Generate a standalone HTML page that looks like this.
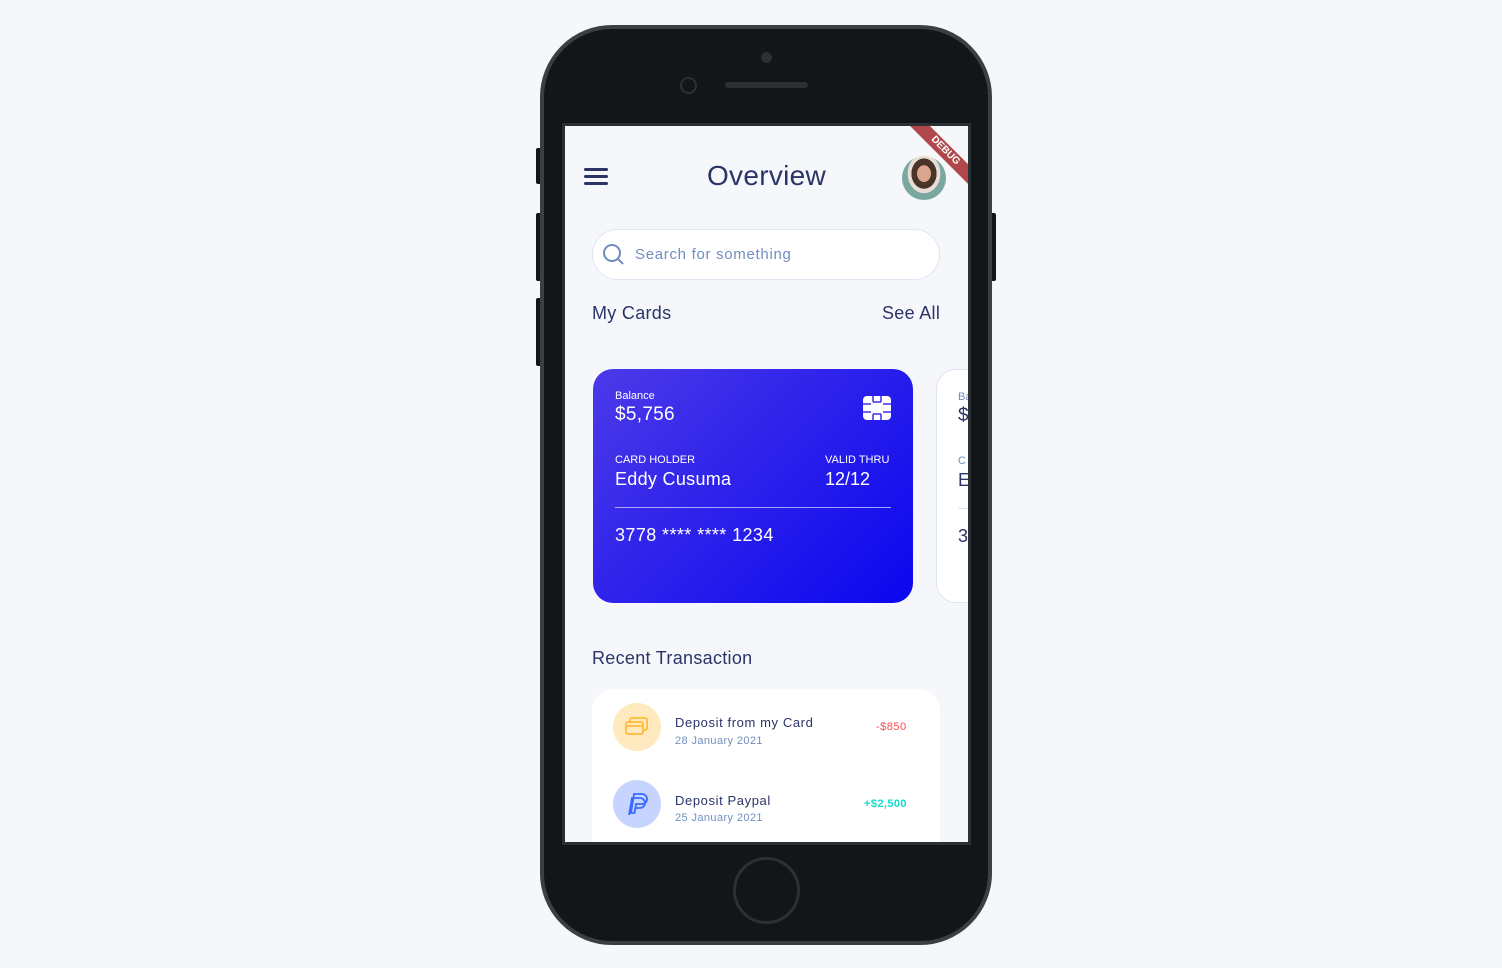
<!DOCTYPE html>
<html><head><style>
*{margin:0;padding:0;box-sizing:border-box}
body{width:1502px;height:968px;background:#f5f7fb;position:relative;overflow:hidden;font-family:"Liberation Sans",sans-serif}
.abs{position:absolute}
.phone{left:540px;top:25px;width:452px;height:920px;background:#131618;border:4px solid #3a3f43;border-radius:72px}
.btn{background:#131618;border-radius:2px}
.screen{left:565px;top:126px;width:403px;height:716px;background:#f5f7fb;overflow:hidden}
.t{color:#2b3467}
</style></head><body>
<div class="abs btn" style="left:536px;top:148px;width:6px;height:36px"></div>
<div class="abs btn" style="left:536px;top:213px;width:6px;height:68px"></div>
<div class="abs btn" style="left:536px;top:298px;width:6px;height:68px"></div>
<div class="abs btn" style="left:990px;top:213px;width:6px;height:68px"></div>
<div class="abs phone"></div>
<div class="abs" style="left:761px;top:52px;width:11px;height:11px;border-radius:50%;background:#2b3034"></div>
<div class="abs" style="left:725px;top:82px;width:83px;height:6px;border-radius:3px;background:#2b3034"></div>
<div class="abs" style="left:680px;top:77px;width:17px;height:17px;border-radius:50%;border:2px solid #2b3034"></div>
<div class="abs" style="left:733px;top:857px;width:67px;height:67px;border-radius:50%;border:3px solid #2b3034"></div>
<div class="abs" style="left:562px;top:123px;width:409px;height:722px;background:#2b3034"></div>
<div class="abs screen">
 <div class="abs" style="left:19px;top:42px;width:24px;height:3px;background:#2b3467;border-radius:2px"></div>
 <div class="abs" style="left:19px;top:49px;width:24px;height:3px;background:#2b3467;border-radius:2px"></div>
 <div class="abs" style="left:19px;top:56px;width:24px;height:3px;background:#2b3467;border-radius:2px"></div>
 <div class="abs t" style="left:0;width:403px;top:34px;text-align:center;font-size:28px;letter-spacing:.3px">Overview</div>
 <div class="abs" style="left:337px;top:30px;width:44px;height:44px;border-radius:50%;background:radial-gradient(ellipse at 50% 40%,#d9a58c 0 22%,#4a3328 23% 40%,#e8ddd4 41% 52%,#7aa79f 53%)"></div>
 <div class="abs" style="left:320px;top:18px;width:120px;height:14px;background:#b0474b;transform:rotate(45deg);color:#fff;font-size:10px;font-weight:bold;text-align:center;line-height:14px">DEBUG</div>
 <div class="abs" style="left:27px;top:103px;width:348px;height:51px;background:#fff;border:1px solid #dfe6f1;border-radius:26px"></div>
 <svg class="abs" style="left:37px;top:117px" width="24" height="24" viewBox="0 0 24 24"><circle cx="10" cy="10" r="8" fill="none" stroke="#718ebf" stroke-width="2"/><path d="M16 16l5 5" stroke="#718ebf" stroke-width="2"/></svg>
 <div class="abs" style="left:70px;top:120px;font-size:15px;color:#718ebf;letter-spacing:.7px">Search for something</div>
 <div class="abs t" style="left:27px;top:177px;font-size:18px;letter-spacing:.3px">My Cards</div>
 <div class="abs t" style="left:317px;top:177px;font-size:18px;letter-spacing:.3px">See All</div>
 <div class="abs" style="left:28px;top:243px;width:320px;height:234px;border-radius:20px;background:linear-gradient(135deg,#4c3ae8,#0a06ef);color:#fff">
  <div class="abs" style="left:22px;top:21px;font-size:11px">Balance</div>
  <div class="abs" style="left:22px;top:35px;font-size:19px;letter-spacing:.3px">$5,756</div>
  <svg class="abs" style="left:270px;top:27px" width="28" height="24" viewBox="0 0 28 24"><rect width="28" height="24" rx="4" fill="#fff"/><path d="M0 8h8M0 16h8M20 8h8M20 16h8M10 0v6M18 0v6M10 18v6M18 18v6M10 6h8M10 18h8" stroke="#3a2ef0" stroke-width="1.5" fill="none"/></svg>
  <div class="abs" style="left:22px;top:85px;font-size:11px">CARD HOLDER</div>
  <div class="abs" style="left:22px;top:100px;font-size:18px;letter-spacing:.3px">Eddy Cusuma</div>
  <div class="abs" style="left:232px;top:85px;font-size:11px">VALID THRU</div>
  <div class="abs" style="left:232px;top:100px;font-size:18px">12/12</div>
  <div class="abs" style="left:22px;top:138px;width:276px;height:1px;background:rgba(255,255,255,.6)"></div>
  <div class="abs" style="left:22px;top:156px;font-size:18px;letter-spacing:.4px">3778 **** **** 1234</div>
 </div>
 <div class="abs" style="left:371px;top:243px;width:60px;height:234px;border-radius:20px;background:#fff;border:1px solid #dfe6f1">
  <div class="abs" style="left:21px;top:21px;font-size:11px;color:#718ebf">Ba</div>
  <div class="abs t" style="left:21px;top:35px;font-size:19px">$</div>
  <div class="abs" style="left:21px;top:85px;font-size:11px;color:#718ebf">C</div>
  <div class="abs t" style="left:21px;top:100px;font-size:18px">E</div>
  <div class="abs" style="left:21px;top:138px;width:40px;height:1px;background:#dfe6f1"></div>
  <div class="abs t" style="left:21px;top:156px;font-size:18px">3</div>
 </div>
 <div class="abs t" style="left:27px;top:522px;font-size:18px;letter-spacing:.3px">Recent Transaction</div>
 <div class="abs" style="left:27px;top:563px;width:348px;height:200px;background:#fff;border-radius:22px"></div>
 <div class="abs" style="left:48px;top:577px;width:48px;height:48px;border-radius:50%;background:#ffe9bf"></div>
 <svg class="abs" style="left:60px;top:590px" width="24" height="22" viewBox="0 0 24 22"><rect x="5" y="2" width="17" height="12" rx="2" fill="none" stroke="#ffbb38" stroke-width="1.8"/><rect x="1" y="6" width="17" height="12" rx="2" fill="#ffe9bf" stroke="#ffbb38" stroke-width="1.8"/><path d="M1 10h17" stroke="#ffbb38" stroke-width="1.8"/></svg>
 <div class="abs t" style="left:110px;top:589px;font-size:13px;letter-spacing:.6px">Deposit from my Card</div>
 <div class="abs" style="left:110px;top:609px;font-size:11px;color:#718ebf;letter-spacing:.4px">28 January 2021</div>
 <div class="abs" style="left:311px;top:595px;font-size:11px;color:#ff4b4a;letter-spacing:.5px">-$850</div>
 <div class="abs" style="left:48px;top:654px;width:48px;height:48px;border-radius:50%;background:#c7d4ff"></div>
 <svg class="abs" style="left:60px;top:665px" width="24" height="26" viewBox="0 0 24 26"><path d="M6 22L9 3h8a5 5 0 010 10h-6l-1.5 9z" fill="none" stroke="#396aff" stroke-width="1.8"/><path d="M4 24l3-17h8a5 5 0 010 10h-5" fill="none" stroke="#396aff" stroke-width="1.8"/></svg>
 <div class="abs t" style="left:110px;top:667px;font-size:13px;letter-spacing:.6px">Deposit Paypal</div>
 <div class="abs" style="left:110px;top:686px;font-size:11px;color:#718ebf;letter-spacing:.4px">25 January 2021</div>
 <div class="abs" style="left:299px;top:672px;font-size:11px;color:#16dbcc;letter-spacing:.4px;font-weight:bold">+$2,500</div>
</div>
</body></html>
